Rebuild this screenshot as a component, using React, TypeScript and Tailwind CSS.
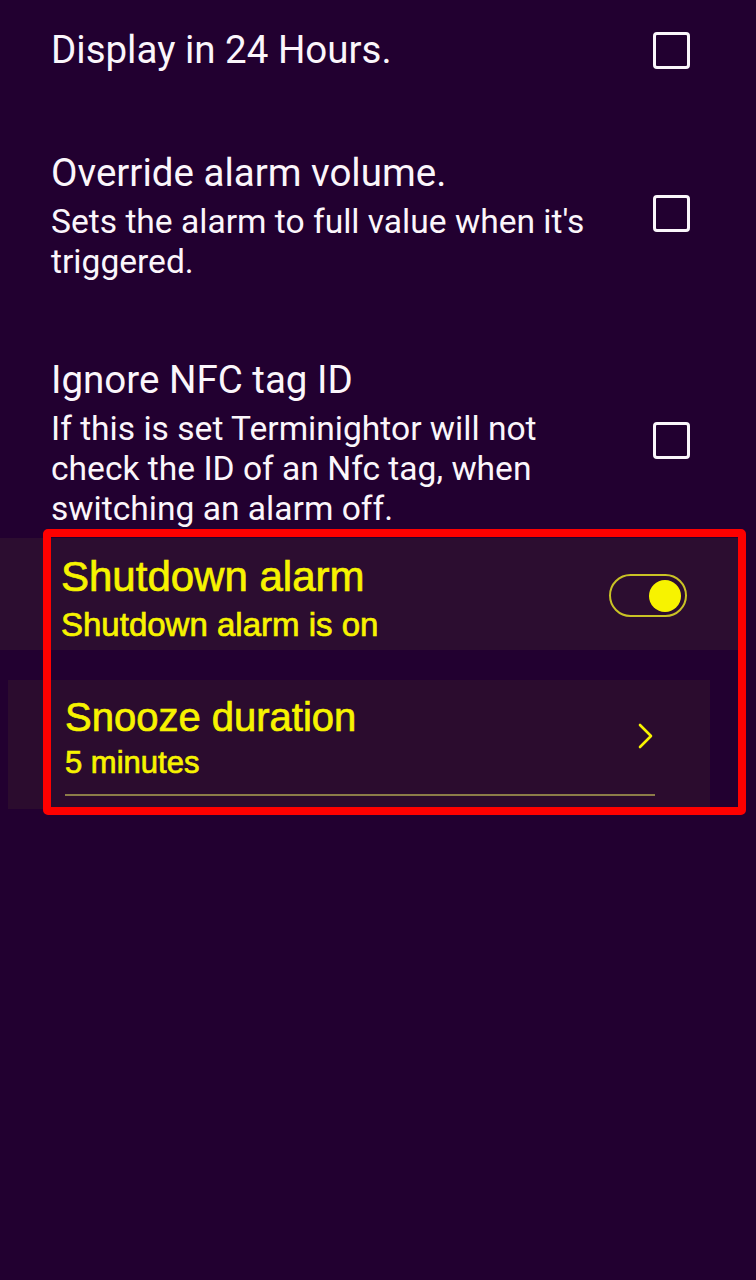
import React from "react";

function CheckBox() {
  return <div className="w-[37px] h-[37px] shrink-0 rounded-[4px] border-[3.5px] border-[#fbf6fb]" />;
}

function Item({ title, lines }: { title: string; lines?: string[] }) {
  return (
    <div className="flex items-center pl-[51px] pr-[66px]">
      <div className="flex-1 min-w-0">
        <div className="text-[38.5px] leading-[58px] text-[#fbf6fb]">{title}</div>
        {lines?.map((l, i) => (
          <div key={i} className="whitespace-nowrap text-[33.6px] leading-[40px] text-[#fbf6fb]">
            {l}
          </div>
        ))}
      </div>
      <CheckBox />
    </div>
  );
}

export default function App() {
  return (
    <div
      className="relative min-h-[1280px] w-[756px] overflow-hidden bg-[#220030]"
      style={{ fontFamily: "Roboto, 'Noto Sans', sans-serif" }}
    >
      <div className="flex flex-col pt-[21px]">
        <Item title="Display in 24 Hours." />
        <div className="h-[65px]" />
        <Item
          title="Override alarm volume."
          lines={["Sets the alarm to full value when it's", "triggered."]}
        />
        <div className="h-[69px]" />
        <Item
          title="Ignore NFC tag ID"
          lines={[
            "If this is set Terminightor will not",
            "check the ID of an Nfc tag, when",
            "switching an alarm off.",
          ]}
        />
        <div className="h-[9px]" />
        {/* Shutdown alarm */}
        <div
          className="flex h-[112px] w-[740px] items-start bg-[#2c0d30] pl-[61px] pr-[53px] pt-[15px] text-[#f7f300] [-webkit-text-stroke:0.7px_#f7f300]"
          style={{ fontFamily: "'Liberation Sans', Arial, sans-serif" }}
        >
          <div className="flex-1">
            <div className="text-[42px] leading-[48px]">Shutdown alarm</div>
            <div className="text-[33px] leading-[48px]">Shutdown alarm is on</div>
          </div>
          <div className="mt-[21px] flex h-[43px] w-[78px] items-center justify-end rounded-full border-2 border-[#c9c225] pr-[4px]">
            <div className="h-[32px] w-[32px] rounded-full bg-[#f7f300]" />
          </div>
        </div>
        <div className="h-[30px]" />
        {/* Snooze duration */}
        <div
          className="ml-[8px] w-[702px] bg-[#2b0c2e] pl-[57px] pr-[55px] pt-[13px] pb-[13px] text-[#f7f300] [-webkit-text-stroke:0.7px_#f7f300]"
          style={{ fontFamily: "'Liberation Sans', Arial, sans-serif" }}
        >
          <div className="flex items-center">
            <div className="flex-1">
              <div className="text-[40px] leading-[48px]">Snooze duration</div>
              <div className="text-[31px] leading-[44px]">5 minutes</div>
            </div>
            <svg width="16" height="26" viewBox="0 0 16 26" className="mr-[1px] mb-[6px]">
              <path d="M2 2 L13 13 L2 24" fill="none" stroke="#f7f300" strokeWidth="2.6" strokeLinecap="round" strokeLinejoin="round" />
            </svg>
          </div>
          <div className="mt-[9px] h-[2px] bg-[#8c7c48]" />
        </div>
      </div>
      {/* annotation overlay */}
      <div className="pointer-events-none absolute left-[43px] top-[529px] h-[286px] w-[703px] rounded-[5px] border-[8px] border-[#fe0000]" />
    </div>
  );
}
